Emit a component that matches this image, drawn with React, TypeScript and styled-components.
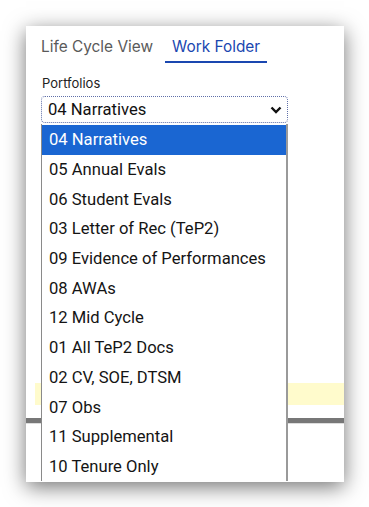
import React from "react";
import styled, { createGlobalStyle } from "styled-components";

const Global = createGlobalStyle`
  html, body { margin: 0; padding: 0; background: #fff; }
  body { font-family: "Inter", "Liberation Sans", sans-serif; }
`;

const Page = styled.div`
  padding: 26px 0 0 26px;
  height: 507px;
  box-sizing: border-box;
`;

const Card = styled.div`
  position: relative;
  width: 318px;
  height: 456px;
  background: #fff;
  overflow: hidden;
  box-shadow: 0 5px 20px rgba(0, 0, 0, 0.55);
`;

const Tabs = styled.div`
  display: flex;
  gap: 5px;
  padding: 10px 0 0 8px;
`;

const Tab = styled.div<{ $active?: boolean }>`
  padding: 1px 7px 4px;
  font-size: 15.4px;
  line-height: 20px;
  color: ${(p) => (p.$active ? "#1a47b0" : "#5a5a5a")};
  border-bottom: 2px solid ${(p) => (p.$active ? "#1a47b0" : "transparent")};
`;

const Field = styled.div`
  position: relative;
  padding: 12px 0 0 15px;
`;

const Label = styled.div`
  font-size: 13px;
  line-height: 16px;
  color: #222;
  margin-bottom: 5px;
  padding-left: 1px;
`;

const SelectBox = styled.div`
  width: 247px;
  height: 27px;
  box-sizing: border-box;
  display: flex;
  align-items: center;
  justify-content: space-between;
  padding: 0 5px 0 6px;
  border: 1px dotted #5f6fa8;
  border-radius: 4px;
  font-family: "Roboto", "Liberation Sans", sans-serif;
  font-size: 16.6px;
  color: #111;
`;

const List = styled.ul`
  position: absolute;
  top: 98px;
  left: 15px;
  width: 247px;
  box-sizing: border-box;
  margin: 0;
  padding: 1px 0 0;
  list-style: none;
  background: #fff;
  border-left: 1px solid #8a8a8a;
  border-right: 2px solid #9a9a9a;
  z-index: 2;
`;

const Option = styled.li<{ $selected?: boolean }>`
  height: 29.7px;
  display: flex;
  align-items: center;
  padding-left: 7px;
  font-family: "Roboto", "Liberation Sans", sans-serif;
  font-size: 16.6px;
  color: ${(p) => (p.$selected ? "#fff" : "#141414")};
  background: ${(p) => (p.$selected ? "#1a66d2" : "transparent")};
`;

const Body = styled.div`
  margin-top: 260px;
`;

const Notice = styled.div`
  margin-left: 9px;
  height: 22px;
  background: #fffbcc;
`;

const Divider = styled.div`
  margin-top: 13px;
  height: 5px;
  background: #777;
  border-bottom: 1px solid #ddd;
`;

const options = [
  "04 Narratives",
  "05 Annual Evals",
  "06 Student Evals",
  "03 Letter of Rec (TeP2)",
  "09 Evidence of Performances",
  "08 AWAs",
  "12 Mid Cycle",
  "01 All TeP2 Docs",
  "02 CV, SOE, DTSM",
  "07 Obs",
  "11 Supplemental",
  "10 Tenure Only",
];

function Chevron() {
  return (
    <svg width="12" height="8" viewBox="0 0 12 8">
      <path d="M1.5 1.5 L6 6 L10.5 1.5" fill="none" stroke="#111" strokeWidth="2.4" />
    </svg>
  );
}

export default function App() {
  return (
    <Page>
      <Global />
      <Card>
        <Tabs>
          <Tab>Life Cycle View</Tab>
          <Tab $active>Work Folder</Tab>
        </Tabs>
        <Field>
          <Label>Portfolios</Label>
          <SelectBox>
            <span>04 Narratives</span>
            <Chevron />
          </SelectBox>
        </Field>
        <List>
          {options.map((o, i) => (
            <Option key={o} $selected={i === 0}>
              {o}
            </Option>
          ))}
        </List>
        <Body>
          <Notice />
          <Divider />
        </Body>
      </Card>
    </Page>
  );
}
